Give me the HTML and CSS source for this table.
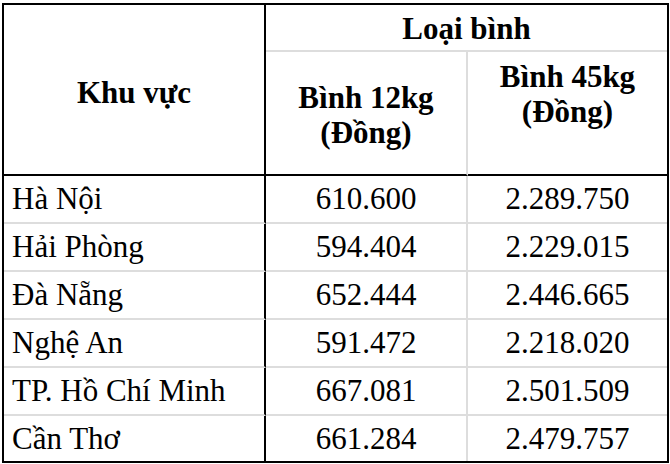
FILE: index.html
```html
<!DOCTYPE html>
<html lang="vi">
<head>
<meta charset="utf-8">
<link rel="stylesheet" href="styles.css">
</head>
<body>
<div class="price-table">
  <div class="cell head region">Khu vực</div>
  <div class="cell head group">Loại bình</div>
  <div class="cell head sub sub-12">Bình 12kg<br>(Đồng)</div>
  <div class="cell head sub sub-45">Bình 45kg<br>(Đồng)</div>

  <div class="cell name">Hà Nội</div>
  <div class="cell num c2">610.600</div>
  <div class="cell num c3">2.289.750</div>

  <div class="cell name">Hải Phòng</div>
  <div class="cell num c2">594.404</div>
  <div class="cell num c3">2.229.015</div>

  <div class="cell name">Đà Nẵng</div>
  <div class="cell num c2">652.444</div>
  <div class="cell num c3">2.446.665</div>

  <div class="cell name">Nghệ An</div>
  <div class="cell num c2">591.472</div>
  <div class="cell num c3">2.218.020</div>

  <div class="cell name">TP. Hồ Chí Minh</div>
  <div class="cell num c2">667.081</div>
  <div class="cell num c3">2.501.509</div>

  <div class="cell name last">Cần Thơ</div>
  <div class="cell num c2 last">661.284</div>
  <div class="cell num c3 last">2.479.757</div>
</div>
</body>
</html>
```

FILE: styles.css
```css
html, body {
  margin: 0;
  padding: 0;
  background: #ffffff;
}

body {
  padding: 3px 0 0 2px;
  font-family: "Liberation Serif", "Times New Roman", serif;
  color: #000000;
}

.price-table {
  display: grid;
  grid-template-columns: 262px 202px 199px;
  grid-template-rows: 47px 124px repeat(5, 48px) 45px;
  width: 663px;
  border: 2px solid #000000;
}

.cell {
  box-sizing: border-box;
  font-size: 31px;
  display: flex;
  align-items: center;
  border-bottom: 2px solid #dddddd;
}

.head {
  font-weight: bold;
  justify-content: center;
  text-align: center;
  line-height: 35px;
}

.region {
  grid-row: 1 / 3;
  grid-column: 1;
  border-right: 2px solid #000000;
  border-bottom: 2px solid #000000;
  padding-top: 6px;
}

.group {
  grid-column: 2 / 4;
  grid-row: 1;
  padding-top: 1px;
}

.sub {
  grid-row: 2;
  border-bottom: 2px solid #000000;
}

.sub-12 {
  grid-column: 2;
  border-right: 2px solid #dddddd;
  padding-top: 4px;
}

.sub-45 {
  grid-column: 3;
  align-items: flex-start;
  padding-top: 7px;
}

.name {
  grid-column: 1;
  padding-left: 8px;
  border-right: 2px solid #000000;
}

.num {
  justify-content: center;
}

.c2 {
  border-right: 2px solid #dddddd;
}

.last {
  border-bottom: none;
}
```
